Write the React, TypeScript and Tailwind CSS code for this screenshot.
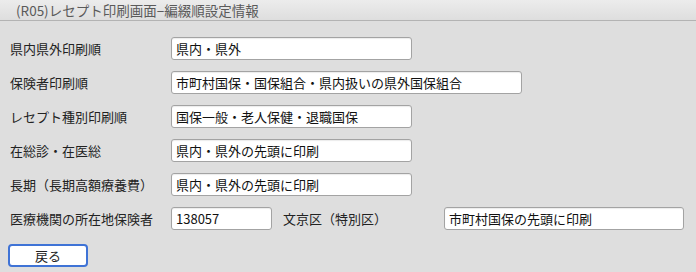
import { FC } from "react";

const rows = [
  { label: "県内県外印刷順", value: "県内・県外", w: "w-[241px]" },
  { label: "保険者印刷順", value: "市町村国保・国保組合・県内扱いの県外国保組合", w: "w-[351px]" },
  { label: "レセプト種別印刷順", value: "国保一般・老人保健・退職国保", w: "w-[241px]" },
  { label: "在総診・在医総", value: "県内・県外の先頭に印刷", w: "w-[241px]" },
  { label: "長期（長期高額療養費）", value: "県内・県外の先頭に印刷", w: "w-[241px]" },
];

const Field: FC<{ value: string; className: string }> = ({ value, className }) => (
  <div
    className={`h-[23px] bg-white border border-[#a3a3a3] rounded-[3px] pl-[4px] flex items-center text-[13px] text-[#111] shadow-[inset_0_1px_1px_rgba(0,0,0,0.08)] ${className}`}
  >
    {value}
  </div>
);

const App: FC = () => {
  return (
    <div
      className="w-[696px] h-[272px] bg-[#dedede] flex flex-col"
      style={{ fontFamily: '"Noto Sans CJK JP", "Noto Sans", sans-serif' }}
    >
      <div className="h-[21px] shrink-0 bg-gradient-to-b from-[#ececec] to-[#dedede] border-b border-[#b3b3b3] flex items-center pl-[16px] text-[13.5px] text-[#5a5a5a]">
        (R05)レセプト印刷画面−編綴順設定情報
      </div>

      <div className="flex flex-col gap-[11px] pt-[16px] pl-[10px]">
        {rows.map((r) => (
          <div key={r.label} className="flex items-center">
            <span className="w-[161px] text-[13px] text-[#222]">{r.label}</span>
            <Field value={r.value} className={r.w} />
          </div>
        ))}
        <div className="flex items-center">
          <span className="w-[161px] text-[13px] text-[#222]">医療機関の所在地保険者</span>
          <Field value="138057" className="w-[101px]" />
          <span className="ml-[11px] w-[161px] text-[13px] text-[#222]">文京区（特別区）</span>
          <Field value="市町村国保の先頭に印刷" className="w-[240px]" />
        </div>
      </div>

      <div className="pl-[8px] pt-[14px]">
        <button className="w-[80px] h-[23px] bg-white border-2 border-[#3f73d6] rounded-[4px] text-[13px] text-[#222] flex items-center justify-center">
          戻る
        </button>
      </div>
    </div>
  );
};

export default App;
